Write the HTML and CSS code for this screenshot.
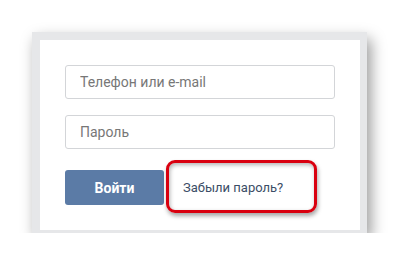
FILE: index.html
```html
<!DOCTYPE html>
<html lang="ru">
	<head>
		<meta charset="UTF-8">
		<title>Вход</title>
		<link rel="stylesheet" href="styles.css">
	</head>
	<body>
		<div class="login-frame">
			<form class="login-box">
				<input class="field" type="text" placeholder="Телефон или e-mail">
				<input class="field" type="password" placeholder="Пароль">
				<div class="actions">
					<button class="btn-login" type="button">Войти</button>
					<a href="#" class="forgot">Забыли пароль?</a>
				</div>
			</form>
		</div>
	</body>
</html>
```

FILE: styles.css
```css
body {
	margin: 0;
	padding: 32px 0 0 32px;
	background: #fff;
	font-family: Roboto, 'Open Sans', sans-serif;
}

.login-frame {
	width: 320px;
	border-style: solid;
	border-color: #e6e7e9;
	border-width: 8px 7px 3px 8px;
	box-shadow: 4px 7px 14px rgba(0, 0, 0, 0.4);
}

.login-box {
	display: flex;
	flex-direction: column;
	background: #fff;
	padding: 25px;
	margin: 0;
}

.field {
	box-sizing: border-box;
	width: 270px;
	height: 34px;
	margin: 0 0 16px 0;
	padding: 0 14px;
	border: 1px solid #d3d5d8;
	border-radius: 3px;
	font-family: Roboto, sans-serif;
	font-size: 14px;
	color: #333;
}

.field::placeholder {
	color: #777;
}

.actions {
	display: flex;
	align-items: center;
	margin-top: 5px;
	position: relative;
}

.btn-login {
	width: 99px;
	height: 35px;
	border: none;
	border-radius: 3px;
	background: #5b7ba6;
	color: #fff;
	font-family: Roboto, sans-serif;
	font-weight: bold;
	font-size: 14px;
	padding: 0;
}

.forgot {
	margin-left: 19px;
	color: #3b4d66;
	font-size: 13px;
	text-decoration: none;
}

/* red highlight frame */
.forgot::after {
	content: '';
	position: absolute;
	left: 101px;
	top: -10px;
	width: 145px;
	height: 47px;
	border: 3px solid #d9000f;
	border-radius: 9px;
	box-shadow: 1px 3px 4px rgba(0, 0, 0, 0.35), inset 1px 2px 4px rgba(0, 0, 0, 0.3);
}
```
